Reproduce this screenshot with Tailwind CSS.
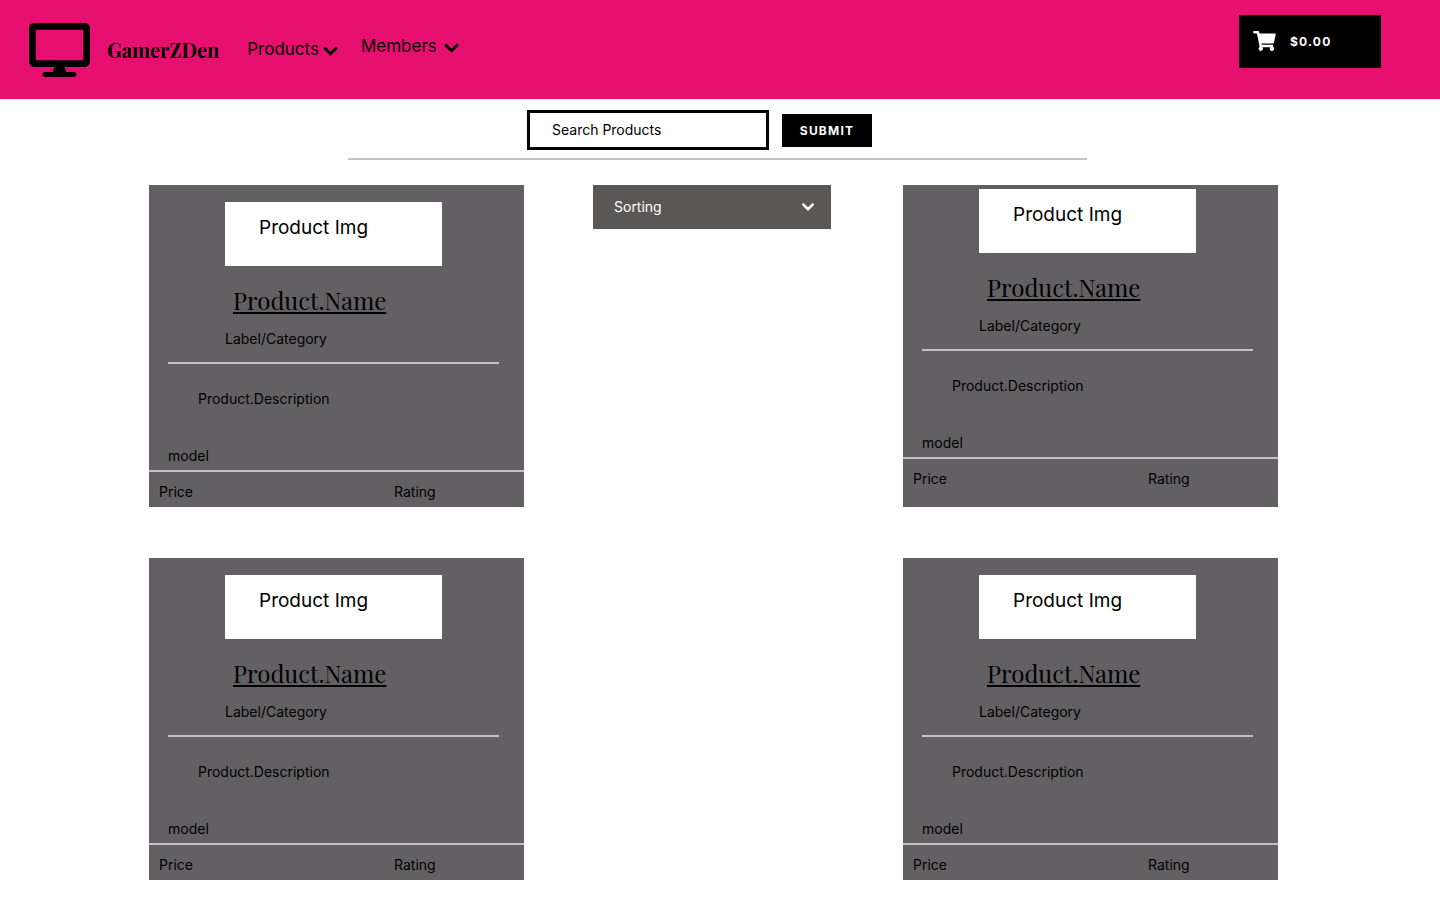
<!DOCTYPE html>
<html lang="en">
<head>
<meta charset="utf-8">
<meta name="viewport" content="width=device-width, initial-scale=1">
<title>GamerZDen</title>
<script src="https://cdn.jsdelivr.net/npm/@tailwindcss/browser@4"></script>
</head>
<body class="bg-white font-['Inter',sans-serif] text-sm text-black">
<header class="flex min-h-[99px] items-start justify-between bg-[#e70f70] pr-[59px] pl-[29px]">
  <div class="flex items-start">
    <a href="#" class="flex items-center gap-[17px] pt-[23px]">
      <svg class="h-[54px] w-[61px]" viewBox="0 0 576 512" preserveAspectRatio="none" fill="currentColor" aria-hidden="true"><path d="M528 0H48C21.500 0 0 21.500 0 48v320c0 26.500 21.500 48 48 48h192l-16 48h-72c-13.300 0-24 10.700-24 24s10.700 24 24 24h272c13.300 0 24-10.700 24-24s-10.700-24-24-24h-72l-16-48h192c26.500 0 48-21.500 48-48V48c0-26.500-21.500-48-48-48zm-16 352H64V64h448v288z"/></svg>
      <span class="font-['Playfair_Display','Liberation_Serif',serif] text-xl font-bold">GamerZDen</span>
    </a>
    <nav class="flex items-start gap-[23px] pl-7 text-[17px] leading-6">
      <button type="button" class="flex items-center gap-1 pt-[37px]">Products
        <svg class="mt-1 h-[10px] w-[15px]" viewBox="0 0 15 10" fill="none" stroke="currentColor" stroke-width="3" aria-hidden="true"><path d="M1.200 1.500 7.500 7.700 13.800 1.500"/></svg>
      </button>
      <button type="button" class="flex items-center gap-[7px] pt-[34px]">Members
        <svg class="mt-1 h-[10px] w-[15px]" viewBox="0 0 15 10" fill="none" stroke="currentColor" stroke-width="3" aria-hidden="true"><path d="M1.200 1.500 7.500 7.700 13.800 1.500"/></svg>
      </button>
    </nav>
  </div>
  <button type="button" class="mt-[15px] flex h-[53px] w-[142px] items-center gap-[14px] bg-black pl-[14px] text-xs font-bold tracking-widest text-white">
    <svg class="mb-[2px] h-5 w-[23px]" viewBox="0 0 576 512" fill="currentColor" aria-hidden="true"><path d="M528.120 301.319l47.273-208C578.806 78.301 567.391 64 551.990 64H159.208l-9.166-44.810C147.758 8.021 137.930 0 126.529 0H24C10.745 0 0 10.745 0 24v16c0 13.255 10.745 24 24 24h69.883l70.248 343.435C147.325 417.100 136 435.222 136 456c0 30.928 25.072 56 56 56s56-25.072 56-56c0-15.674-6.447-29.835-16.824-40h209.647C430.447 426.165 424 440.326 424 456c0 30.928 25.072 56 56 56s56-25.072 56-56c0-22.172-12.888-41.332-31.579-50.405l5.517-24.276c3.413-15.018-8.002-29.319-23.403-29.319H218.117l-6.545-32h293.145c11.206 0 20.920-7.754 23.403-18.681z"/></svg>
    $0.00
  </button>
</header>

<main>
  <form class="mr-[353px] ml-[348px] flex items-center justify-center gap-[13px] border-b-2 border-[#c4c4c4] pt-[11px] pr-[36px] pb-2">
    <input type="search" aria-label="Search Products" placeholder="Search Products" class="h-10 w-[242px] border-3 border-black bg-white px-[22px] pb-[2px] text-sm placeholder:text-black">
    <button type="submit" class="h-[33px] w-[90px] bg-black pt-[2px] text-xs font-bold tracking-widest text-white">SUBMIT</button>
  </form>

  <div class="grid grid-cols-[375fr_379fr_375fr] gap-y-[51px] pt-[25px] pr-[162px] pb-5 pl-[149px]">
    <article class="bg-[#636063] pt-[17px]">
      <div class="mr-[82px] ml-[76px] h-16 bg-white pt-3 pl-[34px] text-[19px] leading-7">Product Img</div>
      <h2 class="mt-4 ml-[84px] font-['Playfair_Display','Liberation_Serif',serif] text-2xl leading-9"><a href="#" class="underline decoration-2 underline-offset-2">Product.Name</a></h2>
      <p class="mt-[11px] ml-[76px]">Label/Category</p>
      <hr class="mt-[13px] mr-[25px] ml-[19px] border-t-2 border-[#c4c0c4]">
      <p class="mt-[25px] ml-[49px]">Product.Description</p>
      <p class="mt-[37px] ml-[19px]">model</p>
      <div class="mt-1 grid grid-cols-[235fr_130fr] border-t-2 border-[#c4c0c4] pt-[10px] pb-[5px] pl-[10px]"><span>Price</span><span>Rating</span></div>
    </article>

    <div class="relative mr-[72px] ml-[69px] h-11">
      <select aria-label="Sorting" class="h-11 w-full appearance-none bg-[#5a5856] px-[21px] text-sm text-white">
        <option>Sorting</option>
      </select>
      <svg class="pointer-events-none absolute top-[18px] right-[17px] h-[9px] w-3" viewBox="0 0 12 9" fill="none" stroke="white" stroke-width="2.500" stroke-linecap="round" aria-hidden="true"><path d="M1.300 1.500 6 6.200 10.700 1.500"/></svg>
    </div>

    <article class="bg-[#636063] pt-1">
      <div class="mr-[82px] ml-[76px] h-16 bg-white pt-3 pl-[34px] text-[19px] leading-7">Product Img</div>
      <h2 class="mt-4 ml-[84px] font-['Playfair_Display','Liberation_Serif',serif] text-2xl leading-9"><a href="#" class="underline decoration-2 underline-offset-2">Product.Name</a></h2>
      <p class="mt-[11px] ml-[76px]">Label/Category</p>
      <hr class="mt-[13px] mr-[25px] ml-[19px] border-t-2 border-[#c4c0c4]">
      <p class="mt-[25px] ml-[49px]">Product.Description</p>
      <p class="mt-[37px] ml-[19px]">model</p>
      <div class="mt-1 grid grid-cols-[235fr_130fr] border-t-2 border-[#c4c0c4] pt-[10px] pb-[5px] pl-[10px]"><span>Price</span><span>Rating</span></div>
    </article>

    <article class="bg-[#636063] pt-[17px]">
      <div class="mr-[82px] ml-[76px] h-16 bg-white pt-3 pl-[34px] text-[19px] leading-7">Product Img</div>
      <h2 class="mt-4 ml-[84px] font-['Playfair_Display','Liberation_Serif',serif] text-2xl leading-9"><a href="#" class="underline decoration-2 underline-offset-2">Product.Name</a></h2>
      <p class="mt-[11px] ml-[76px]">Label/Category</p>
      <hr class="mt-[13px] mr-[25px] ml-[19px] border-t-2 border-[#c4c0c4]">
      <p class="mt-[25px] ml-[49px]">Product.Description</p>
      <p class="mt-[37px] ml-[19px]">model</p>
      <div class="mt-1 grid grid-cols-[235fr_130fr] border-t-2 border-[#c4c0c4] pt-[10px] pb-[5px] pl-[10px]"><span>Price</span><span>Rating</span></div>
    </article>

    <article class="col-start-3 bg-[#636063] pt-[17px]">
      <div class="mr-[82px] ml-[76px] h-16 bg-white pt-3 pl-[34px] text-[19px] leading-7">Product Img</div>
      <h2 class="mt-4 ml-[84px] font-['Playfair_Display','Liberation_Serif',serif] text-2xl leading-9"><a href="#" class="underline decoration-2 underline-offset-2">Product.Name</a></h2>
      <p class="mt-[11px] ml-[76px]">Label/Category</p>
      <hr class="mt-[13px] mr-[25px] ml-[19px] border-t-2 border-[#c4c0c4]">
      <p class="mt-[25px] ml-[49px]">Product.Description</p>
      <p class="mt-[37px] ml-[19px]">model</p>
      <div class="mt-1 grid grid-cols-[235fr_130fr] border-t-2 border-[#c4c0c4] pt-[10px] pb-[5px] pl-[10px]"><span>Price</span><span>Rating</span></div>
    </article>
  </div>
</main>
</body>
</html>
